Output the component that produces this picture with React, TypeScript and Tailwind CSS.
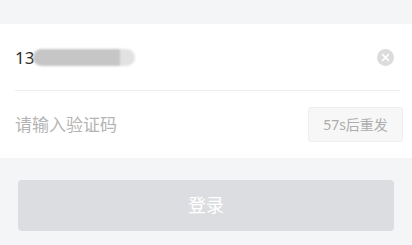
import React from "react";

const font = {
  fontFamily: '"Noto Sans", "Noto Sans CJK SC", sans-serif',
};

function ClearIcon() {
  return (
    <svg width="17" height="17" viewBox="0 0 17 17" className="block">
      <circle cx="8.5" cy="8.5" r="8.5" fill="#dcdcdc" />
      <path d="M5.6 5.6 L11.4 11.4 M11.4 5.6 L5.6 11.4" stroke="#fff" strokeWidth="1.6" strokeLinecap="round" />
    </svg>
  );
}

export default function App() {
  return (
    <div className="w-[412px] h-[245px] bg-[#f4f5f7] pt-6 overflow-hidden" style={font}>
      {/* Form panel */}
      <div className="bg-white">
        <div className="h-[66px] flex items-center pl-[15px] pr-[18px]">
          <span className="text-[17px] text-[#2a2a2a] leading-none">13</span>
          <div className="flex h-[17px] rounded-full overflow-hidden blur-[1px] -ml-px">
            <div className="w-[87px] bg-[#c6c6c6]" />
            <div className="w-[15px] bg-[#e2e2e2]" />
          </div>
          <div className="ml-auto">
            <ClearIcon />
          </div>
        </div>
        <div className="ml-[15px] mr-3 h-px bg-[#ececec]" />
        <div className="h-[67px] flex items-center pl-[15px] pr-[9px]">
          <span className="text-[17px] text-[#b4b4b4] leading-none">请输入验证码</span>
          <div className="ml-auto w-[95px] h-[35px] flex items-center justify-center rounded-[3px] bg-[#f7f7f7] border border-[#eeeeee] text-[14px] text-[#adadad]">
            57s后重发
          </div>
        </div>
      </div>

      {/* Submit */}
      <div className="px-[18px] pt-[22px]">
        <button className="w-full h-[51px] rounded-[4px] bg-[#dcdde0] text-white text-[18px] flex items-center justify-center">
          登录
        </button>
      </div>
    </div>
  );
}
